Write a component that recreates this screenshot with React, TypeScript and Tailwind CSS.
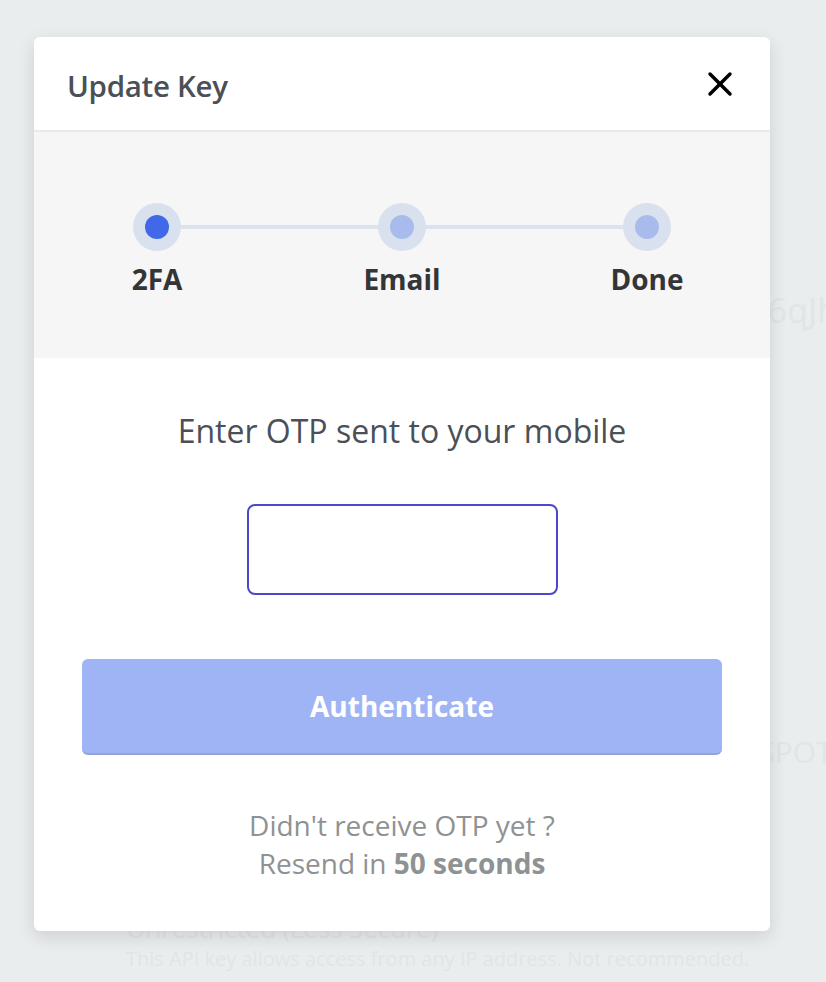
import { X } from "lucide-react";

const steps = [
  { label: "2FA", active: true },
  { label: "Email", active: false },
  { label: "Done", active: false },
];

export default function App() {
  return (
    <div
      className="relative h-[982px] w-[826px] overflow-hidden bg-[#e9edee]"
      style={{ fontFamily: '"Open Sans", "Noto Sans", sans-serif' }}
    >
      {/* Page behind the overlay */}
      <div className="flex h-full flex-col px-[126px] text-[#e1e5e6]">
        <div className="mt-[293px] self-end text-[34px] leading-none -mr-[138px]">Pf6qJh</div>
        <div className="mt-[410px] self-end text-[30px] leading-none -mr-[150px]">SPOTX</div>
        <div className="mt-[147px] text-[27px] leading-none tracking-[-0.6px]">Unrestricted (Less Secure)</div>
        <div className="mt-[8px] text-[20px] leading-none whitespace-nowrap">
          This API key allows access from any IP address. Not recommended.
        </div>
      </div>

      {/* Modal */}
      <div className="absolute left-[34px] top-[37px] flex h-[894px] w-[736px] flex-col overflow-hidden rounded-[6px] bg-white shadow-[0_6px_18px_rgba(0,0,0,0.12)]">
        <div className="flex h-[95px] shrink-0 items-center justify-between border-b-2 border-[#e8eaeb] pl-[33px] pr-[30px]">
          <h2 className="mt-[5px] text-[29.5px] font-semibold tracking-[-0.3px] text-[#4a5056]">
            Update Key
          </h2>
          <X className="h-[40px] w-[40px] text-black" strokeWidth={2.1} />
        </div>

        <div className="flex h-[226px] shrink-0 flex-col bg-[#f6f6f6] pt-[71px]">
          <div className="relative mx-auto flex w-[538px] justify-between">
            <div className="absolute left-[24px] right-[24px] top-[22px] h-[4px] bg-[#dbe3ef]" />
            {steps.map((s) => (
              <div key={s.label} className="relative flex w-[48px] flex-col items-center">
                <div className="flex h-[48px] w-[48px] items-center justify-center rounded-full bg-[#dae1ee]">
                  <div
                    className={`h-[24px] w-[24px] rounded-full ${
                      s.active ? "bg-[#4068e8]" : "bg-[#a9bbec]"
                    }`}
                  />
                </div>
                <span className="mt-[8px] whitespace-nowrap text-[28px] font-bold leading-[40px] text-[#333536]">
                  {s.label}
                </span>
              </div>
            ))}
          </div>
        </div>

        <div className="flex flex-col items-center px-[48px]">
          <p className="mt-[52px] text-[32px] leading-[42px] text-[#4a5056]">
            Enter OTP sent to your mobile
          </p>
          <input
            type="text"
            className="mt-[52px] h-[91px] w-[311px] rounded-[8px] border-2 border-[#4c48cc] bg-white outline-none"
          />
          <button className="mt-[64px] h-[96px] w-[640px] rounded-[6px] border-b-2 border-[#92a4dc] bg-[#9fb4f4] text-[28px] font-bold text-white">
            Authenticate
          </button>
          <div className="mt-[51px] text-center text-[28px] leading-[38px] text-[#8e9292]">
            <p>Didn't receive OTP yet ?</p>
            <p>
              Resend in <span className="font-bold">50 seconds</span>
            </p>
          </div>
        </div>
      </div>
    </div>
  );
}
